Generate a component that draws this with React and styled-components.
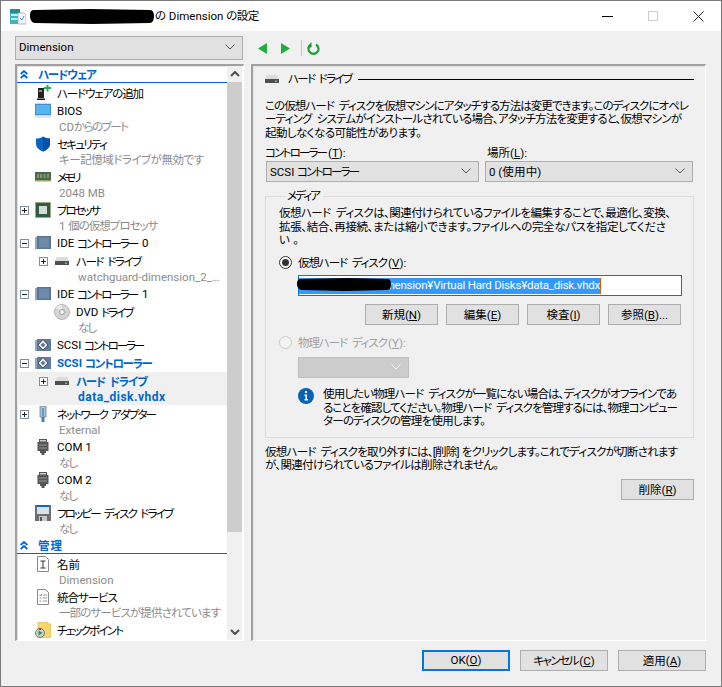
import React from 'react';
import styled, { createGlobalStyle } from 'styled-components';

const GlobalStyle = createGlobalStyle`
  html, body {
    margin: 0;
    padding: 0;
    background: #f0f0f0;
  }
  body {
    font-family: Roboto, "Noto Sans CJK JP", sans-serif;
    font-size: 11.5px;
    font-feature-settings: "palt";
    color: #000;
  }
  * {
    box-sizing: border-box;
  }
  u {
    text-underline-offset: 1px;
  }
`;

// Meiryo UI kana are narrower than Noto's, so lines are squeezed and then justified to their width
const Fit = styled.span`
  display: inline-block;
  width: ${(p) => p.$w - 3}px;
  margin-right: 3px;
  letter-spacing: -3px;
  word-spacing: 3px;
  text-align: justify;
  text-align-last: justify;
`;

const Line = styled(Fit)`
  display: block;
  width: ${(p) => p.$w - 2}px;
  margin-right: 0;
`;

const Latin = styled.span`
  letter-spacing: 0;
`;

const Window = styled.div`
  width: 722px;
  height: 687px;
  border: 1px solid #7a7a7a;
  background: #f0f0f0;
  display: flex;
  flex-direction: column;
  overflow: hidden;
`;

const TitleBar = styled.div`
  height: 30px;
  background: #fff;
  display: flex;
  align-items: center;
  padding: 0 17px 0 9px;
  flex-shrink: 0;
`;

const TitleText = styled.span`
  margin-left: 1px;
  line-height: 16px;
  white-space: nowrap;
`;

const TitleControls = styled.div`
  margin-left: auto;
  display: flex;
  gap: 35px;
  align-items: center;
`;

const TopRow = styled.div`
  display: flex;
  align-items: center;
  height: 24px;
  margin: 5px 0 4px 14px;
`;

const Combo = styled.div`
  width: ${(p) => p.$width || 'auto'};
  height: ${(p) => p.$height || '21px'};
  background: ${(p) => (p.$disabled ? '#ccc' : '#e1e1e1')};
  border: 1px solid ${(p) => (p.$disabled ? '#bfbfbf' : '#adadad')};
  display: flex;
  align-items: center;
  justify-content: space-between;
  padding: 0 7px 2px 3px;
  white-space: nowrap;
  flex-shrink: 0;
`;

const Toolbar = styled.div`
  display: flex;
  align-items: center;
  margin-left: 15px;
`;

const ToolDivider = styled.div`
  width: 1px;
  height: 16px;
  background: #c4c4c4;
  margin: 0 5px 0 11px;
`;

const Panels = styled.div`
  display: flex;
  gap: 7px;
  height: 577px;
  margin-left: 14px;
`;

const Panel = styled.div`
  border-style: solid;
  border-width: 2px 1px 1px 2px;
  border-color: #a0a0a0 #fff #fff #a0a0a0;
  box-shadow: 1px 1px 0 #e3e3e3 inset;
`;

const LeftPanel = styled(Panel)`
  width: 229px;
  background: #fff;
  display: flex;
  overflow: hidden;
`;

const Tree = styled.div`
  width: 210px;
  overflow: hidden;
`;

const SectionHeader = styled.div`
  height: 17px;
  margin-bottom: 1px;
  display: flex;
  align-items: center;
  color: #0066cc;
  font-weight: 700;
  border-bottom: 1px solid #0066cc;
  padding-left: 3px;
`;

const SectionTitle = styled(Fit)`
  margin-left: 10px;
`;

const TreeItem = styled.div`
  background: ${(p) => (p.$selected ? '#f0f0f0' : 'transparent')};
`;

const TreeRow = styled.div`
  height: 18px;
  display: flex;
  align-items: center;
  padding-left: ${(p) => p.$level * 19}px;
  white-space: nowrap;
  color: ${(p) => (p.$active ? '#0066cc' : '#000')};
  font-weight: ${(p) => (p.$active ? 700 : 400)};
`;

const ExpanderSlot = styled.span`
  width: 18px;
  padding-left: 3px;
  display: flex;
  align-items: center;
  flex-shrink: 0;
`;

const IconSlot = styled.span`
  width: 16px;
  height: 16px;
  margin-right: 6px;
  display: flex;
  align-items: center;
  justify-content: center;
  flex-shrink: 0;
`;

const TreeDetail = styled.div`
  height: 15px;
  line-height: 15px;
  padding-left: ${(p) => 42 + p.$level * 19}px;
  color: ${(p) => (p.$active ? '#0066cc' : '#8c8c8c')};
  font-weight: ${(p) => (p.$active ? 700 : 400)};
  font-size: ${(p) => (p.$active ? '12px' : 'inherit')};
  letter-spacing: ${(p) => (p.$active ? '0.5px' : '0')};
`;

const ScrollBar = styled.div`
  width: 15px;
  background: #f0f0f0;
  display: flex;
  flex-direction: column;
`;

const ScrollArrow = styled.div`
  height: 16px;
  display: flex;
  align-items: center;
  justify-content: center;
  flex-shrink: 0;
`;

const ScrollThumb = styled.div`
  height: 450px;
  background: #cdcdcd;
  margin-bottom: auto;
`;

const RightPanel = styled(Panel)`
  width: 455px;
  padding: 6px 11px 0 12px;
  display: flex;
  flex-direction: column;
`;

const PageHeader = styled.div`
  height: 14px;
  display: flex;
  align-items: center;
  line-height: 14px;
`;

const PageTitle = styled(Fit)`
  margin: 0 8px 0 9px;
  flex-shrink: 0;
`;

const HeaderRule = styled.div`
  flex: 1;
  height: 1px;
  background: #000;
`;

const Paragraph = styled.div`
  margin: ${(p) => p.$top || 0}px 0 0 0;
  line-height: 13.4px;
`;

const LocationGrid = styled.div`
  display: grid;
  grid-template-columns: 213px 208px;
  column-gap: 6px;
  margin: 6px 0 0 1px;
`;

const FieldLabel = styled.label`
  display: block;
  height: 14px;
  line-height: 14px;
  margin-bottom: 1px;
  margin-left: ${(p) => p.$shift || 0}px;
`;

const MediaGroup = styled.fieldset`
  margin: 7px 0 0 0;
  padding: 4px 0 8px 13px;
  border: 1px solid #dcdcdc;
  min-width: 0;
`;

const MediaLegend = styled.legend`
  margin-left: 6px;
  padding: 0 2px;
  height: 14px;
  line-height: 14px;
`;

const RadioRow = styled.div`
  display: flex;
  align-items: center;
  gap: 6px;
  height: 14px;
  margin-top: ${(p) => p.$top}px;
  color: ${(p) => (p.$disabled ? '#a0a0a0' : '#000')};
`;

const Radio = styled.span`
  width: 13px;
  height: 13px;
  border-radius: 50%;
  border: 1px solid ${(p) => (p.$disabled ? '#cccccc' : '#333')};
  background: ${(p) => (p.$disabled ? '#f4f4f4' : '#fff')};
  display: flex;
  align-items: center;
  justify-content: center;
  &::after {
    content: '';
    display: ${(p) => (p.$checked ? 'block' : 'none')};
    width: 7px;
    height: 7px;
    border-radius: 50%;
    background: #333;
  }
`;

const PathField = styled.div`
  position: relative;
  width: 384px;
  height: 21px;
  margin: 6px 0 0 19px;
  background: #fff;
  border: 1px solid #0078d7;
  padding-top: 2px;
`;

const PathSelection = styled.div`
  width: 302px;
  height: 16px;
  background: #3399ff;
  color: #fff;
  line-height: 15px;
  letter-spacing: -0.22px;
  text-align: right;
  white-space: nowrap;
  border-right: 1px solid #d06000;
`;

const PathRedaction = styled.svg`
  position: absolute;
  left: -2px;
  top: 2px;
`;

const ButtonRow = styled.div`
  display: flex;
  gap: 8px;
  margin: 8px 0 0 86px;
`;

const Button = styled.button`
  width: ${(p) => p.$width || '73px'};
  height: 21px;
  padding: 0 0 2px;
  background: #e1e1e1;
  border: ${(p) => (p.$primary ? '2px solid #0078d7' : '1px solid #adadad')};
  font: inherit;
  color: #000;
  white-space: nowrap;
  flex-shrink: 0;
`;

const DiskCombo = styled(Combo)`
  margin: 8px 0 0 19px;
`;

const InfoRow = styled.div`
  display: flex;
  gap: 9px;
  margin: 10px 0 0 19px;
`;

const RemoveRow = styled.div`
  display: flex;
  justify-content: flex-end;
  margin-top: 7px;
`;

const Footer = styled.div`
  display: flex;
  justify-content: flex-end;
  gap: 10px;
  margin: 9px 15px 0 0;
`;

const Chevron = ({ color = '#555' }) => (
  <svg width="10" height="6" viewBox="0 0 10 6">
    <path d="M.5.5 5 5 9.5.5" fill="none" stroke={color} />
  </svg>
);

const Expander = ({ open }) => (
  <svg width="9" height="9" viewBox="0 0 9 9">
    <rect x=".5" y=".5" width="8" height="8" fill="#fff" stroke="#7f8fa0" />
    <path d={open ? 'M2 4.5h5' : 'M2 4.5h5M4.5 2v5'} stroke="#222" />
  </svg>
);

const DoubleChevron = () => (
  <svg width="8" height="9" viewBox="0 0 8 9">
    <path d="M.7 4 4 1l3.3 3M.7 8 4 5l3.3 3" fill="none" stroke="#0066cc" strokeWidth="1.7" />
  </svg>
);

const AddIcon = () => (
  <svg width="16" height="16" viewBox="0 0 16 16">
    <path d="M3 3h6v10H3z" fill="#222" />
    <path d="M2 13.500h8V15H2z" fill="#111" />
    <path d="M4 5h3v2H4z" fill="#888" />
    <path d="M9 2h2.500V0h2v2H16v2h-2.500v2.500h-2V4H9z" fill="#22b14c" />
  </svg>
);

const MonitorIcon = () => (
  <svg width="16" height="16" viewBox="0 0 16 16">
    <rect x="0" y="1" width="16" height="11" fill="#2d8fe0" stroke="#7a8794" strokeWidth=".6" />
    <rect x="1" y="2" width="14" height="9" fill="#55b4f2" />
    <path d="M0 14h16" stroke="#d7dde2" strokeWidth="1.500" />
  </svg>
);

const ShieldIcon = () => (
  <svg width="16" height="16" viewBox="0 0 16 16">
    <path d="M8 .5c2 1.500 4 2 7 2v5c0 4-3 6.500-7 8-4-1.500-7-4-7-8v-5c3 0 5-.5 7-2z" fill="#0a63c2" />
    <path d="M8 .5c2 1.500 4 2 7 2v5c0 4-3 6.500-7 8z" fill="#0752a4" />
  </svg>
);

const MemoryIcon = () => (
  <svg width="16" height="16" viewBox="0 0 16 16">
    <rect x="0" y="3" width="16" height="9" fill="#3e6d57" />
    <path d="M2 5h2v4H2zM5 5h2v4H5zM8.500 5h2v4h-2zM12 5h2v4h-2z" fill="#9d8c62" />
    <path d="M0 11h16v1.500H0z" fill="#a8a060" />
  </svg>
);

const CpuIcon = () => (
  <svg width="16" height="16" viewBox="0 0 16 16">
    <rect x=".5" y=".5" width="15" height="15" fill="#2f5d46" stroke="#b09a4e" strokeDasharray="1 1" />
    <rect x="4" y="4" width="8" height="8" fill="#d3dcd7" />
  </svg>
);

const IdeIcon = () => (
  <svg width="16" height="16" viewBox="0 0 16 16">
    <path d="M0 2.500 2 1.500V14l-2 .5z" fill="#8fa7c0" />
    <rect x="2" y="1" width="14" height="13" fill="#5a7596" />
    <rect x="4" y="2.500" width="10" height="10" fill="#6f8aaa" />
  </svg>
);

const DiskIcon = () => (
  <svg width="14" height="8" viewBox="0 0 14 8">
    <path d="M2 0h10l2 4H0z" fill="#dcdcdc" />
    <rect x="0" y="4" width="14" height="4" fill="#4f4f4f" />
    <rect x="10" y="5.500" width="2" height="1.500" fill="#55d46a" />
  </svg>
);

const DvdIcon = () => (
  <svg width="16" height="16" viewBox="0 0 16 16">
    <circle cx="8" cy="8" r="7.500" fill="#d4d4d4" stroke="#b4b4b4" />
    <path d="M8 8 2 4a7 7 0 0 1 6-3z" fill="#ececec" />
    <circle cx="8" cy="8" r="2.500" fill="#f4f4f4" stroke="#a0a0a0" />
  </svg>
);

const ScsiIcon = () => (
  <svg width="16" height="16" viewBox="0 0 16 16">
    <path d="M0 3h2v11H0z" fill="#8fa7c0" />
    <rect x="2" y="2" width="14" height="12" fill="#5f7da0" />
    <path d="M8 2.500 13 8l-5 5-5-5z" fill="#f2f2f2" stroke="#333" strokeWidth=".8" />
    <path d="M8 5.500 10.500 8 8 10.500 5.500 8z" fill="#5f7da0" />
  </svg>
);

const NicIcon = () => (
  <svg width="16" height="16" viewBox="0 0 16 16">
    <path d="M5 0h6v11H5z" fill="#b8c2cc" stroke="#6f7b87" strokeWidth=".8" />
    <path d="M7 2h2v8H7z" fill="#4f9fd9" />
    <path d="M6.500 11h3v5h-3z" fill="#2e86c8" />
  </svg>
);

const ComIcon = () => (
  <svg width="16" height="16" viewBox="0 0 16 16">
    <path d="M4 0h8v3h1.500v9H11v2H9.500v2h-3v-2H5v-2H2.500V3H4z" fill="#555" />
    <path d="M5 1h6v1.500H5z" fill="#ccc" />
    <path d="M4 6h8M4 9h8" stroke="#999" />
  </svg>
);

const FloppyIcon = () => (
  <svg width="16" height="16" viewBox="0 0 16 16">
    <path d="M0 0h16v16H0z" fill="#6e6e6e" />
    <path d="M2 0h12v2H2z" fill="#0a67c4" />
    <path d="M2 2h12v7H2z" fill="#d9e2ea" />
    <path d="M4 11h8v5H4z" fill="#c8c8c8" />
    <path d="M5 12h2v4H5z" fill="#555" />
  </svg>
);

const NameIcon = () => (
  <svg width="16" height="16" viewBox="0 0 16 16">
    <path d="M2.500.5h8l3 3v12h-11z" fill="#fff" stroke="#8a8a8a" />
    <path d="M5.500 5h5M8 5v7M5.500 12h5" fill="none" stroke="#333" />
  </svg>
);

const ServicesIcon = () => (
  <svg width="16" height="16" viewBox="0 0 16 16">
    <path d="M2.500.5h8l3 3v12h-11z" fill="#fff" stroke="#8a8a8a" />
    <path d="M4.500 6l1 1 1.500-2" fill="none" stroke="#2e86c8" />
    <path d="M8 6h4M8 9h4M8 12h4" stroke="#999" />
    <path d="M4.500 8.500h2v1.500h-2zM4.500 11.500h2V13h-2z" fill="#bbb" />
  </svg>
);

const CheckpointIcon = () => (
  <svg width="16" height="16" viewBox="0 0 16 16">
    <path d="M3 0h10v2l3 0v14H3z" fill="#f5d76e" stroke="#d6b23e" strokeWidth=".6" />
    <circle cx="5" cy="11" r="4.500" fill="#cfcfcf" stroke="#777" />
    <path d="M3.500 8.500 7.500 11l-4 2.500z" fill="#1f9e3a" />
    <path d="M4 6h2v2H4z" fill="#b03030" />
  </svg>
);

const HardwareItems = [
  { icon: AddIcon, label: 'ハードウェアの追加', w: 87 },
  { icon: MonitorIcon, latin: 'BIOS', prefix: 'CD', detail: 'からのブート', dw: 55 },
  { icon: ShieldIcon, label: 'セキュリティ', w: 51, detail: 'キー記憶域ドライブが無効です', dw: 145 },
  { icon: MemoryIcon, label: 'メモリ', w: 23, latinDetail: '2048 MB' },
  { icon: CpuIcon, label: 'プロセッサ', w: 44, prefix: '1 ', detail: '個の仮想プロセッサ', dw: 90, expander: 'closed' },
  { icon: IdeIcon, latin: 'IDE', label: 'コントローラー', w: 62, suffix: '0', expander: 'open' },
  { icon: DiskIcon, label: 'ハード ドライブ', w: 66, latinDetail: 'watchguard-dimension_2_…', expander: 'closed', level: 1 },
  { icon: IdeIcon, latin: 'IDE', label: 'コントローラー', w: 62, suffix: '1', expander: 'open' },
  { icon: DvdIcon, latin: 'DVD', label: 'ドライブ', w: 33, detail: 'なし', dw: 19, level: 1 },
  { icon: ScsiIcon, latin: 'SCSI', label: 'コントローラー', w: 61 },
  { icon: ScsiIcon, latin: 'SCSI', label: 'コントローラー', w: 68, expander: 'open', active: true },
  { icon: DiskIcon, label: 'ハード ドライブ', w: 72, latinDetail: 'data_disk.vhdx', expander: 'closed', level: 1, active: true, selected: true },
  { icon: NicIcon, label: 'ネットワーク アダプター', w: 100, latinDetail: 'External', expander: 'closed' },
  { icon: ComIcon, latin: 'COM 1', detail: 'なし', dw: 19 },
  { icon: ComIcon, latin: 'COM 2', detail: 'なし', dw: 19 },
  { icon: FloppyIcon, label: 'フロッピー ディスク ドライブ', w: 117, detail: 'なし', dw: 19 },
];

const ManagementItems = [
  { icon: NameIcon, label: '名前', w: 23, latinDetail: 'Dimension' },
  { icon: ServicesIcon, label: '統合サービス', w: 61, detail: '一部のサービスが提供されています', dw: 162 },
  { icon: CheckpointIcon, label: 'チェックポイント', w: 67 },
];

function TreeEntry({ item }) {
  const Icon = item.icon;
  const level = item.level || 0;
  const active = item.active;
  return (
    <TreeItem $selected={item.selected}>
      <TreeRow $level={level} $active={active}>
        <ExpanderSlot>
          {item.expander && <Expander open={item.expander === 'open'} />}
        </ExpanderSlot>
        <IconSlot>
          <Icon />
        </IconSlot>
        {item.latin && <Latin>{item.latin}&nbsp;</Latin>}
        {item.label && <Fit $w={item.w}>{item.label}</Fit>}
        {item.suffix && <Latin>&nbsp;{item.suffix}</Latin>}
      </TreeRow>
      {item.detail && (
        <TreeDetail $level={level}>
          {item.prefix}
          <Fit $w={item.dw}>{item.detail}</Fit>
        </TreeDetail>
      )}
      {item.latinDetail && (
        <TreeDetail $level={level} $active={active}>
          {item.latinDetail}
        </TreeDetail>
      )}
    </TreeItem>
  );
}

export default function App() {
  return (
    <>
      <GlobalStyle />
      <Window>
        <TitleBar>
          <svg width="16" height="18" viewBox="0 0 16 18">
            <path d="M0 2h10v15H0z" fill="#3cb6c4" />
            <path d="M0 2h10v4H0z" fill="#1f8b9b" />
            <path d="M1 7h8v2H1zM1 11h8v2H1z" fill="#c8eef2" />
            <path d="M8 6h6l2 2v9H8z" fill="#f5f7f8" stroke="#9aa3aa" strokeWidth=".7" />
            <path d="M10 11l2 2 2-4" fill="none" stroke="#4a90d9" />
          </svg>
          <svg width="124" height="15" viewBox="0 0 124 15" style={{ marginLeft: 4 }}>
            <path d="M4 1 60 0l60 1c3 0 4 3 4 6s-1 7-4 7L62 15 5 14C2 14 0 11 0 7s1-6 4-6z" fill="#000" />
          </svg>
          <TitleText>
            <Fit $w={11}>の</Fit>
            <Latin> Dimension </Latin>
            <Fit $w={33}>の設定</Fit>
          </TitleText>
          <TitleControls>
            <svg width="11" height="1" viewBox="0 0 11 1">
              <path d="M0 .5h11" stroke="#000" />
            </svg>
            <svg width="10" height="10" viewBox="0 0 10 10">
              <rect x=".5" y=".5" width="9" height="9" fill="none" stroke="#ccc" />
            </svg>
            <svg width="11" height="11" viewBox="0 0 11 11">
              <path d="M.5.5l10 10M10.500.5l-10 10" stroke="#222" />
            </svg>
          </TitleControls>
        </TitleBar>

        <TopRow>
          <Combo $width="228px" $height="24px">
            Dimension
            <Chevron />
          </Combo>
          <Toolbar>
            <svg width="9" height="11" viewBox="0 0 9 11">
              <path d="M9 0v11L0 5.500z" fill="#1fae3e" />
            </svg>
            <svg width="9" height="11" viewBox="0 0 9 11" style={{ marginLeft: 14 }}>
              <path d="M0 0v11l9-5.500z" fill="#1fae3e" />
            </svg>
            <ToolDivider />
            <svg width="13" height="13" viewBox="0 0 13 13">
              <path d="M4 2.500a5 5 0 1 0 5 0" fill="none" stroke="#1f9e3a" strokeWidth="2.200" />
              <path d="M4.500 0v5.500H0z" fill="#1f9e3a" />
            </svg>
          </Toolbar>
        </TopRow>

        <Panels>
          <LeftPanel>
            <Tree>
              <SectionHeader>
                <DoubleChevron />
                <SectionTitle $w={59}>ハードウェア</SectionTitle>
              </SectionHeader>
              {HardwareItems.map((item, i) => (
                <TreeEntry key={i} item={item} />
              ))}
              <SectionHeader>
                <DoubleChevron />
                <SectionTitle $w={24}>管理</SectionTitle>
              </SectionHeader>
              {ManagementItems.map((item, i) => (
                <TreeEntry key={i} item={item} />
              ))}
            </Tree>
            <ScrollBar>
              <ScrollArrow>
                <svg width="10" height="6" viewBox="0 0 10 6">
                  <path d="M1 5l4-4 4 4" fill="none" stroke="#505050" strokeWidth="2" />
                </svg>
              </ScrollArrow>
              <ScrollThumb />
              <ScrollArrow>
                <svg width="10" height="6" viewBox="0 0 10 6">
                  <path d="M1 1l4 4 4-4" fill="none" stroke="#505050" strokeWidth="2" />
                </svg>
              </ScrollArrow>
            </ScrollBar>
          </LeftPanel>

          <RightPanel>
            <PageHeader>
              <DiskIcon />
              <PageTitle $w={65}>ハード ドライブ</PageTitle>
              <HeaderRule />
            </PageHeader>
            <Paragraph $top={14}>
              <Line $w={423}>この仮想ハード ディスクを仮想マシンにアタッチする方法は変更できます。このディスクにオペレ</Line>
              <Line $w={416}>ーティング システムがインストールされている場合、アタッチ方法を変更すると、仮想マシンが</Line>
              <Line $w={156}>起動しなくなる可能性があります。</Line>
            </Paragraph>
            <LocationGrid>
              <div>
                <FieldLabel $shift={-1}>
                  <Fit $w={63}>コントローラー</Fit>
                  <Latin>
                    (<u>T</u>):
                  </Latin>
                </FieldLabel>
                <Combo>
                  <span>
                    <Latin>SCSI </Latin>
                    <Fit $w={63}>コントローラー</Fit>
                  </span>
                  <Chevron />
                </Combo>
              </div>
              <div>
                <FieldLabel $shift={2}>
                  <Fit $w={23}>場所</Fit>
                  <Latin>
                    (<u>L</u>):
                  </Latin>
                </FieldLabel>
                <Combo>
                  <span>
                    <Latin>0 (</Latin>
                    <Fit $w={35}>使用中</Fit>
                    <Latin>)</Latin>
                  </span>
                  <Chevron />
                </Combo>
              </div>
            </LocationGrid>
            <MediaGroup>
              <MediaLegend>
                <Fit $w={34}>メディア</Fit>
              </MediaLegend>
              <Paragraph>
                <Line $w={391}>仮想ハード ディスクは、関連付けられているファイルを編集することで、最適化、変換、</Line>
                <Line $w={386}>拡張、結合、再接続、または縮小できます。ファイルへの完全なパスを指定してくださ</Line>
                <Line $w={19}>い。</Line>
              </Paragraph>
              <RadioRow $top={8}>
                <Radio $checked />
                <span>
                  <Fit $w={90}>仮想ハード ディスク</Fit>
                  <Latin>
                    (<u>V</u>):
                  </Latin>
                </span>
              </RadioRow>
              <PathField>
                <PathSelection>mension¥Virtual Hard Disks¥data_disk.vhdx</PathSelection>
                <PathRedaction width="94" height="13" viewBox="0 0 94 13">
                  <path d="M4 1 50 0l40 1c3 0 4 2 4 5s-1 6-4 6L48 13 5 12C2 12 0 9 0 6s1-5 4-5z" fill="#000" />
                </PathRedaction>
              </PathField>
              <ButtonRow>
                <Button>
                  <Fit $w={23}>新規</Fit>
                  <Latin>
                    (<u>N</u>)
                  </Latin>
                </Button>
                <Button>
                  <Fit $w={23}>編集</Fit>
                  <Latin>
                    (<u>E</u>)
                  </Latin>
                </Button>
                <Button>
                  <Fit $w={23}>検査</Fit>
                  <Latin>
                    (<u>I</u>)
                  </Latin>
                </Button>
                <Button>
                  <Fit $w={23}>参照</Fit>
                  <Latin>
                    (<u>B</u>)...
                  </Latin>
                </Button>
              </ButtonRow>
              <RadioRow $top={10} $disabled>
                <Radio $disabled />
                <span>
                  <Fit $w={90}>物理ハード ディスク</Fit>
                  <Latin>
                    (<u>Y</u>):
                  </Latin>
                </span>
              </RadioRow>
              <DiskCombo $width="111px" $disabled>
                <span />
                <Chevron color="#f0f0f0" />
              </DiskCombo>
              <InfoRow>
                <svg width="16" height="16" viewBox="0 0 16 16" style={{ flexShrink: 0 }}>
                  <circle cx="8" cy="8" r="8" fill="#0a63b0" />
                  <path d="M7 3h2v2H7zM6.500 6.500H9V11h1v1.500H6.500V11h1V8h-1z" fill="#fff" />
                </svg>
                <Paragraph>
                  <Line $w={353}>使用したい物理ハード ディスクが一覧にない場合は、ディスクがオフラインであ</Line>
                  <Line $w={354}>ることを確認してください。物理ハード ディスクを管理するには、物理コンピュー</Line>
                  <Line $w={162}>ターのディスクの管理を使用します。</Line>
                </Paragraph>
              </InfoRow>
            </MediaGroup>
            <Paragraph $top={8}>
              <Line $w={412}>仮想ハード ディスクを取り外すには、[削除] をクリックします。これでディスクが切断されます</Line>
              <Line $w={233}>が、関連付けられているファイルは削除されません。</Line>
            </Paragraph>
            <RemoveRow>
              <Button>
                <Fit $w={23}>削除</Fit>
                <Latin>
                  (<u>R</u>)
                </Latin>
              </Button>
            </RemoveRow>
          </RightPanel>
        </Panels>

        <Footer>
          <Button $width="88px" $primary>
            OK(<u>O</u>)
          </Button>
          <Button $width="88px">
            <Fit $w={46}>キャンセル</Fit>
            <Latin>
              (<u>C</u>)
            </Latin>
          </Button>
          <Button $width="88px">
            <Fit $w={23}>適用</Fit>
            <Latin>
              (<u>A</u>)
            </Latin>
          </Button>
        </Footer>
      </Window>
    </>
  );
}
